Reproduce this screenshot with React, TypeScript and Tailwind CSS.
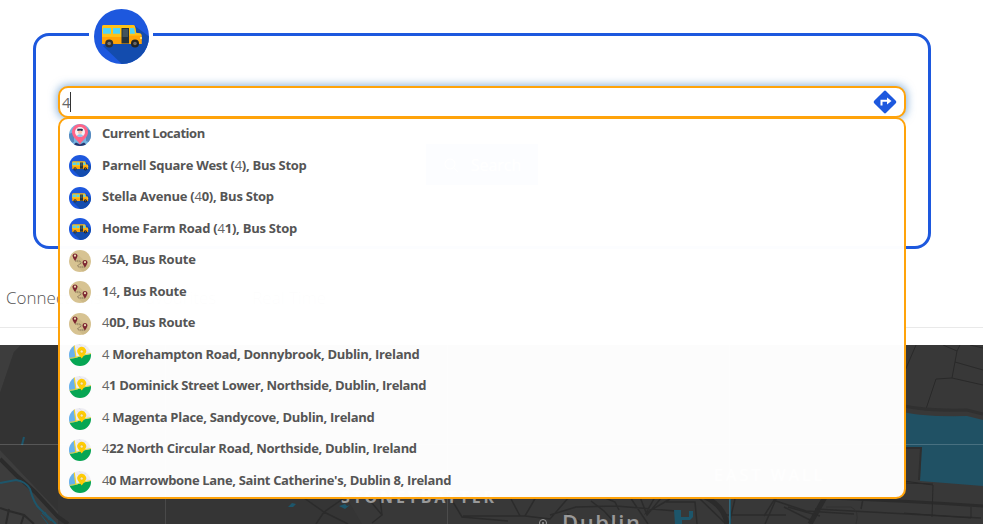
import React from "react";

const uiFont = "font-['Open_Sans','Noto_Sans',sans-serif]";

function BusIcon({ className }: { className: string }) {
  return (
    <svg viewBox="0 0 55 55" className={className}>
      <defs>
        <clipPath id="bus-disc"><circle cx="27.5" cy="27.5" r="27.5" /></clipPath>
      </defs>
      <g clipPath="url(#bus-disc)">
        <path d="M0 0h55v55H0z" fill="#1d58de" />
        <path d="M9 37 30 57H57V29L41 17Z" fill="#134cae" />
        <path d="M8 18q0-2 2-2H39q1.500 0 2 1.500L42.300 24l4 .5q1.500.5 1.500 2.500v8H8Z" fill="#ffa408" />
        <path d="M8 18q0-2 2-2H39q1.500 0 2 1.500L42.300 24l4 .5q1 .5 1.300 2H35v1.500H8Z" fill="#ffc116" />
        <path d="M9 19h8v5.700H9zM19 19h7v5.700h-7zM36 19h4l1 5.700h-5z" fill="#4ed5f8" />
        <path d="M27.500 19H35v15.500h-7.500z" fill="#25333a" />
        <path d="M28.500 20H34v8h-5.500z" fill="#43545c" />
        <path d="M46 28h2v2h-2z" fill="#ffe36a" />
        <circle cx="15.200" cy="34.500" r="4" fill="#30302f" />
        <circle cx="15.200" cy="34.500" r="1.800" fill="#777" />
        <circle cx="41" cy="34.500" r="4" fill="#222" />
        <circle cx="41" cy="34.500" r="1.800" fill="#666" />
      </g>
    </svg>
  );
}

function PersonPinIcon({ className }: { className: string }) {
  return (
    <svg viewBox="0 0 22 22" className={className}>
      <defs><clipPath id="person-disc"><circle cx="11" cy="11" r="11" /></clipPath></defs>
      <g clipPath="url(#person-disc)">
        <path d="M0 0h22v22H0z" fill="#75b4e1" />
        <path d="M0 10l5-2v10l-5 2zM17 4l5 3v12l-5-2z" fill="#5788bd" />
        <path d="M3 22l4-3.500 4 2 4-2 4 3.500z" fill="#25366f" />
        <path d="M11 20.500C9 16 3 14 3 8a8 8 0 0 1 16 0C19 14 13 16 11 20.500Z" fill="#ff6589" />
        <circle cx="11" cy="8" r="5" fill="#f7f2f4" />
        <path d="M7.800 11.700Q11 9 14.200 11.700 11 14.300 7.800 11.700Z" fill="#8fc5ee" />
        <circle cx="11" cy="8" r="2.100" fill="#ffc4ac" />
        <path d="M8.300 7V4.800h4.700l1 .8-.7 1.700-2-.8Z" fill="#253052" />
      </g>
    </svg>
  );
}

function RouteIcon({ className }: { className: string }) {
  return (
    <svg viewBox="0 0 22 22" className={className}>
      <defs><clipPath id="route-disc"><circle cx="11" cy="11" r="11" /></clipPath></defs>
      <g clipPath="url(#route-disc)">
        <path d="M0 0h22v22H0z" fill="#d7c392" />
        <path d="M8 4l9 8 5 5v5h-8l-5-5 4-1-7-5Z" fill="#cdb987" />
        <path d="M6 11h3q3 0 3 1.500T9 15q-1 2 2 2h5" fill="none" stroke="#6e604c" strokeWidth=".8" strokeDasharray="1.300 .5" />
        <path d="M6 11Q3.200 7 3.500 5.500a2.600 2.600 0 0 1 5 0Q8.500 7 6 11Z" fill="#7d2632" />
        <path d="M16 17.500Q13.200 13.500 13.500 12a2.600 2.600 0 0 1 5 0q0 1.500-2.500 5.500Z" fill="#7d2632" />
        <circle cx="6" cy="5.700" r="1.100" fill="#e9d9b3" />
        <circle cx="16" cy="12.200" r="1.100" fill="#e9d9b3" />
      </g>
    </svg>
  );
}

function PlaceIcon({ className }: { className: string }) {
  return (
    <svg viewBox="0 0 22 22" className={className}>
      <defs><clipPath id="place-disc"><circle cx="11" cy="11" r="11" /></clipPath></defs>
      <g clipPath="url(#place-disc)">
        <path d="M0 0h22v22H0z" fill="#eeedf2" />
        <path d="M8 3l14 7M10 0l10 12M17 2l-7 6" stroke="#dddde6" strokeWidth=".7" />
        <path d="M0 0h5l2 14-7 1Z" fill="#69b1ec" />
        <path d="M5 0l2 14" stroke="#f7d52c" strokeWidth="1.200" />
        <path d="M0 15Q7 14 11 12.500T22 10v12H0Z" fill="#06a653" />
        <path d="M0 14.500Q7 13.500 11 12T22 9.500" stroke="#e9d51d" strokeWidth=".8" fill="none" />
        <path d="M12.700 14.500 9.200 10a4.400 4.400 0 1 1 7 0Z" fill="#ffcc05" />
        <circle cx="12.700" cy="7.500" r="1.500" fill="#f7edbd" stroke="#e6ad08" strokeWidth=".5" />
      </g>
    </svg>
  );
}

const icons = { person: PersonPinIcon, bus: BusIcon, route: RouteIcon, place: PlaceIcon };

type Suggestion = { icon: keyof typeof icons; text: string; spacing: string };

const suggestions: Suggestion[] = [
  { icon: "person", text: "Current Location", spacing: "tracking-[-0.45px]" },
  { icon: "bus", text: "Parnell Square West (4), Bus Stop", spacing: "tracking-[-0.27px]" },
  { icon: "bus", text: "Stella Avenue (40), Bus Stop", spacing: "tracking-[-0.25px]" },
  { icon: "bus", text: "Home Farm Road (41), Bus Stop", spacing: "tracking-[-0.24px]" },
  { icon: "route", text: "45A, Bus Route", spacing: "tracking-[-0.2px]" },
  { icon: "route", text: "14, Bus Route", spacing: "tracking-[-0.25px]" },
  { icon: "route", text: "40D, Bus Route", spacing: "tracking-[-0.28px]" },
  { icon: "place", text: "4 Morehampton Road, Donnybrook, Dublin, Ireland", spacing: "tracking-[-0.3px]" },
  { icon: "place", text: "41 Dominick Street Lower, Northside, Dublin, Ireland", spacing: "tracking-[-0.345px]" },
  { icon: "place", text: "4 Magenta Place, Sandycove, Dublin, Ireland", spacing: "tracking-[-0.3px]" },
  { icon: "place", text: "422 North Circular Road, Northside, Dublin, Ireland", spacing: "tracking-[-0.31px]" },
  { icon: "place", text: "40 Marrowbone Lane, Saint Catherine's, Dublin 8, Ireland", spacing: "tracking-[-0.35px]" },
];

// The typed digit is set light and the rest of the suggestion bold.
function SuggestionText({ text, spacing }: { text: string; spacing: string }) {
  return (
    <span className={`whitespace-pre text-[13px] leading-5 font-bold text-[#555] ${spacing}`}>
      {text.split(/(4)/).map((part, i) =>
        part === "4" ? <span key={i} className="font-normal text-[#666]">4</span> : part
      )}
    </span>
  );
}

function CityMap() {
  return (
    <svg viewBox="0 345 983 179" className="block h-[179px] w-full bg-[#383838]">
      <path d="M0 345H21L14 352 0 393ZM0 450l70 74H0z" fill="#3d3d3d" />
      <path d="M21 345H160V524H70L0 450V393L14 352Z" fill="#333" />
      <path d="M58 495H345L362 524H58Z" fill="#353535" />
      <g fill="none" stroke="#2b2b2b">
        <path d="M0 459 16 475 35 492 58 517 68 524" strokeWidth="4" />
        <path d="M0 508l9 3 15 4 10 9M9 509 6 524M24 515l-3 9" strokeWidth="2" />
        <path d="M304 498l20 14 20-14M324 512l-8 12M324 512l24 12M367 497l15 18-10 8M380 498l2 17M450 497l12 20 46 4M463 516h62l11-19M510 497l10 19M525 516l25 3 19-22M550 515l26-8 40-1 60 5M567 514l16 10M591 501l13 10 12 13M603 497l12 5 4 8M630 497l18 27M640 497l7 18 15-18M655 497l-9 16 24-14M666 502h29l2 22M698 497l28 27M708 497l18 18h60M765 524l12-27M776 497l-12 19M776 501l30 10 48 3" strokeWidth="1.500" />
        <path d="M705 497q19 9 22 27M825 497l-15 27" strokeWidth="5" />
        <path d="M735 499l-5 21M815 509l166 9M863 499l-2 10M788 507l32 9M784 507l28 14" strokeWidth="1.500" />
        <path d="M826 507h25q9 4 5 17" stroke="#303030" />
        <path d="M830 498Q910 501 983 506" strokeWidth="3" />
      </g>
      <g fill="none" stroke="#292929" strokeWidth="1">
        <path d="M916 345l-12 28M943 345l14 6 3-6M957 351l-5 27 31 7M955 362l28 8M926 409l10-30 16-1M904 481l29 4-1 32M904 483l29 1M904 513l67 5v-11" />
        <path d="M970 345l13 3" />
      </g>
      <path d="M904 406q22 5 63 4l16 4" fill="none" stroke="#303030" strokeWidth="3" />
      <path d="M904 412q17 5 63 4l16 4v66l-63-5 1-32-17-1Z" fill="#205164" />
      <path d="M904 448h17l-2 32" fill="none" stroke="#2e2e2e" strokeWidth="2" />
      <g fill="none" stroke="#1d566b">
        <path d="M24 437l-2 8" strokeWidth="2" />
        <path d="M0 483l16-3q9 1 14 9 4 15 10 20l16 15" strokeWidth="2" />
        <path d="M42 513l9 8M41 515l7 9M45 512l4 8" />
        <path d="M730 497v27" strokeWidth="2" />
      </g>
      <path d="M288 507l4-4 4 1-3 3zM339 506l6-2 2 2 3-1-5 4zM674 510h7v7h8v-6h4v6l-3 3h-8v4h-7z" fill="#1d566b" />
      <path d="M0 444.500H983" stroke="#fff" strokeOpacity=".18" />
      <path d="M165.500 345V524M447.500 345V524M729.500 345V524" stroke="#fff" strokeOpacity=".1" />
      <text x="341" y="502.500" fontSize="16" textLength="153" fill="#999" className="font-sans font-bold">STONEYBATTER</text>
      <text x="714" y="481" fontSize="16" textLength="108" fill="#999">EAST WALL</text>
      <circle cx="543" cy="523" r="3.500" fill="#333" stroke="#999" />
      <circle cx="543" cy="523" r="1" fill="#999" />
      <text x="562" y="531" fontSize="22" textLength="78" fill="#999" fontWeight="600">Dublin</text>
    </svg>
  );
}

export default function App() {
  return (
    <main className={`h-[524px] w-[983px] overflow-hidden bg-white text-[#555] ${uiFont}`}>
      <div className="pt-[9px] pl-[33px]">
        <fieldset className="h-[240px] w-[898px] rounded-[16px] border-[3px] border-[#1d58de] pl-[22px]">
          <legend className="ml-[31px] h-[51px] w-[64px] pl-[5px]">
            <BusIcon className="size-[55px]" />
          </legend>
          <div className="relative mt-[26px] w-[848px]">
            <div className="relative flex h-8 items-center justify-between rounded-[10px] border-2 border-[#ffa30a] bg-white pr-[7px] pl-[2px] shadow-[0_0_8px_1px_rgba(50,120,190,0.6)]">
              <span className="flex items-center text-[15px] leading-5 font-normal text-[#666]">
                4<span className="-ml-px h-[20px] w-px bg-[#333]" />
              </span>
              <svg viewBox="0 0 24 24" className="size-6">
                <path d="M10.800 1.200q1.200-1.200 2.400 0l9.600 9.600q1.200 1.200 0 2.400l-9.600 9.600q-1.200 1.200-2.400 0l-9.600-9.600q-1.200-1.200 0-2.400Z" fill="#1d58de" />
                <path d="M8.500 15.500v-4.700h7" stroke="white" strokeWidth="2" fill="none" />
                <path d="M14 7.500l4.500 3.500-4.500 3.500z" fill="white" />
              </svg>
            </div>
            <ul className="absolute top-[31px] left-0 h-[382px] w-full rounded-[10px] border-2 border-[#ffa30a] bg-white/[0.99]">
              {suggestions.map((s) => {
                const Icon = icons[s.icon];
                return (
                  <li key={s.text} className="flex h-[31.55px] items-start pl-[9px]">
                    <Icon className="mt-[4.6px] mr-[11px] size-[22px] shrink-0" />
                    <span className="flex pt-[4px]"><SuggestionText text={s.text} spacing={s.spacing} /></span>
                  </li>
                );
              })}
            </ul>
          </div>
          <button className="mt-[26px] ml-[368px] flex h-[41px] w-[112px] items-center justify-center gap-3 bg-[#1d58de] text-base text-white">
            <svg viewBox="0 0 16 16" className="size-4" fill="none" stroke="white"><circle cx="7" cy="7" r="5" /><path d="M11 11l4 4" /></svg>
            Search
          </button>
        </fieldset>
      </div>
      <nav className="flex h-[79px] items-end gap-9 border-b border-[#e9e9e9] pb-[17px] pl-[6px] text-[17px] leading-6 font-light">
        <span>Connections</span><span>Favourites</span><span>Real Time</span>
      </nav>
      <div className="h-[17px]" />
      <CityMap />
    </main>
  );
}
